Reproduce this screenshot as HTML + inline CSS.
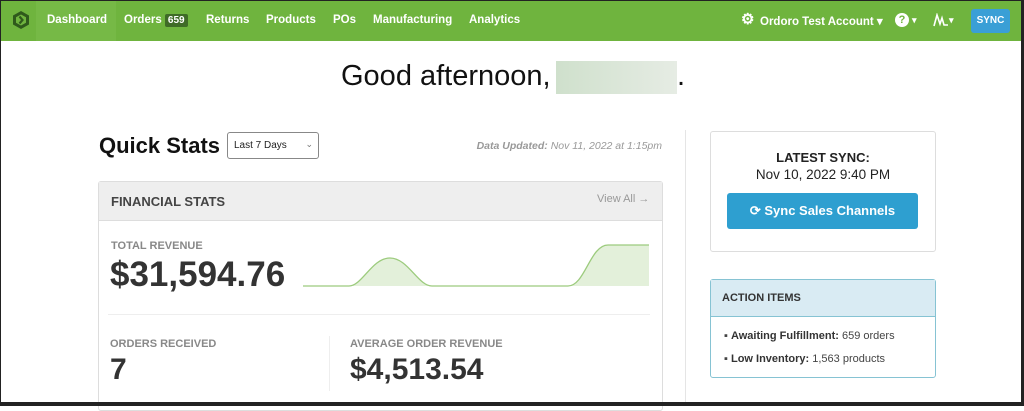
<!DOCTYPE html>
<html><head><meta charset="utf-8"><style>
*{box-sizing:border-box;margin:0;padding:0}
body{width:1024px;height:406px;overflow:hidden;background:#fff;font-family:"Liberation Sans",Arial,sans-serif;position:relative;color:#222}
.abs{position:absolute}
.nav{left:0;top:0;width:1024px;height:41px;background:#6fb43e;border-top:1px solid #222}
.nav .it{position:absolute;top:13px;color:#fff;font-weight:bold;font-size:11.5px}
.badge{background:#3f6b27;border-radius:2px;padding:1px 3px;font-size:10px}
.brd{border:1px solid #ddd}
.lbl{color:#888;font-size:11px;font-weight:bold}
.big{font-weight:bold;color:#333}
</style></head><body>
<div class="abs nav">
 <div class="abs" style="left:36px;top:0;width:80px;height:40px;background:#76b946"></div>
 <svg class="abs" style="left:11px;top:9px" width="20" height="20" viewBox="0 0 20 20"><polygon points="10,1 18,5.5 18,14.5 10,19 2,14.5 2,5.5" fill="#2f5a1c"/><polygon points="10,4.5 15,7.3 15,12.7 10,15.5 5,12.7 5,7.3" fill="#6fb43e"/><path d="M8.5,6.5 L11.5,10 L8.5,13.5" stroke="#2f5a1c" stroke-width="2.2" fill="none"/></svg>
 <span class="it" style="left:47px">Dashboard</span>
 <span class="it" style="left:124px">Orders <span class="badge">659</span></span>
 <span class="it" style="left:206px">Returns</span>
 <span class="it" style="left:266px">Products</span>
 <span class="it" style="left:333px">POs</span>
 <span class="it" style="left:373px">Manufacturing</span>
 <span class="it" style="left:469px">Analytics</span>
 <span class="it" style="left:741px;font-size:15px;top:9px">⚙</span>
 <span class="it" style="left:760px">Ordoro Test Account ▾</span>
 <span class="abs" style="left:895px;top:12px;width:14px;height:14px;border-radius:50%;background:#fff;color:#6fb43e;font-size:11px;font-weight:bold;text-align:center;line-height:14px">?</span>
 <span class="it" style="left:912px;font-size:9px;top:14px">▾</span>
 <svg class="abs" style="left:933px;top:12px" width="16" height="14" viewBox="0 0 16 14"><path d="M1,13 L4,2 L7,11 L9,5 L11,12 L15,12" stroke="#fff" stroke-width="1.6" fill="none"/></svg>
 <span class="it" style="left:949px;font-size:9px;top:14px">▾</span>
 <div class="abs" style="left:971px;top:8px;width:39px;height:24px;background:#3a9fd6;border-radius:3px;color:#fff;font-size:10px;font-weight:bold;text-align:center;line-height:24px">SYNC</div>
</div>
<div class="abs" style="left:341px;top:60px;font-size:29px;color:#111">Good afternoon,</div>
<div class="abs" style="left:556px;top:61px;width:121px;height:33px;background:linear-gradient(90deg,#cfe0cc,#e6ece4)"></div>
<div class="abs" style="left:677px;top:60px;font-size:29px;color:#111">.</div>

<div class="abs" style="left:99px;top:133px;font-size:22px;font-weight:bold;color:#111">Quick Stats</div>
<div class="abs" style="left:227px;top:132px;width:92px;height:27px;border:1px solid #888;border-radius:3px;font-size:10px;padding:7px 6px;color:#222">Last 7 Days<span style="position:absolute;right:5px;top:6px;font-size:9px;color:#777">⌄</span></div>
<div class="abs" style="left:420px;top:140px;width:242px;text-align:right;font-size:10.5px;font-style:italic;color:#999"><b>Data Updated:</b> Nov 11, 2022 at 1:15pm</div>

<div class="abs" style="left:685px;top:130px;width:1px;height:272px;background:#e5e5e5"></div>

<div class="abs brd" style="left:98px;top:181px;width:565px;height:230px;border-radius:3px"></div>
<div class="abs" style="left:99px;top:182px;width:563px;height:39px;background:#eee;border-bottom:1px solid #ddd"></div>
<div class="abs" style="left:111px;top:194px;font-size:13px;font-weight:bold;color:#444">FINANCIAL STATS</div>
<div class="abs" style="left:597px;top:193px;font-size:11px;color:#999">View All →</div>
<div class="abs lbl" style="left:111px;top:240px">TOTAL REVENUE</div>
<div class="abs big" style="left:110px;top:255px;font-size:35px">$31,594.76</div>
<svg class="abs" style="left:0;top:0" width="1024" height="406"><path d="M303,286 L349,286 C362,286 372,258 390,258 C408,258 418,286 432,286 L568,286 C585,286 590,245 608,245 L649,245 L649,286 Z" fill="#e3f0da" stroke="none"/><path d="M303,286 L349,286 C362,286 372,258 390,258 C408,258 418,286 432,286 L568,286 C585,286 590,245 608,245 L649,245" fill="none" stroke="#9ccb7d" stroke-width="1.3"/></svg>
<div class="abs" style="left:108px;top:314px;width:542px;height:1px;background:#eee"></div>
<div class="abs" style="left:329px;top:336px;width:1px;height:55px;background:#eee"></div>
<div class="abs lbl" style="left:110px;top:338px">ORDERS RECEIVED</div>
<div class="abs big" style="left:110px;top:353px;font-size:30px">7</div>
<div class="abs lbl" style="left:350px;top:338px">AVERAGE ORDER REVENUE</div>
<div class="abs big" style="left:350px;top:353px;font-size:30px">$4,513.54</div>

<div class="abs brd" style="left:710px;top:131px;width:226px;height:121px;border-radius:3px"></div>
<div class="abs" style="left:710px;top:150px;width:226px;text-align:center;font-size:13px;font-weight:bold;color:#222">LATEST SYNC:</div>
<div class="abs" style="left:710px;top:167px;width:226px;text-align:center;font-size:13.5px;color:#222">Nov 10, 2022 9:40 PM</div>
<div class="abs" style="left:727px;top:193px;width:191px;height:36px;background:#2e9fd0;border-radius:3px;color:#fff;font-size:13px;font-weight:bold;text-align:center;line-height:36px">⟳ Sync Sales Channels</div>

<div class="abs" style="left:710px;top:279px;width:226px;height:99px;border:1px solid #86c3d3;border-radius:3px"></div>
<div class="abs" style="left:711px;top:280px;width:224px;height:37px;background:#d9ebf3;border-bottom:1px solid #86c3d3"></div>
<div class="abs" style="left:722px;top:292px;font-size:11px;font-weight:bold;color:#333">ACTION ITEMS</div>
<div class="abs" style="left:724px;top:330px;font-size:11px;color:#444">▪ <b style="color:#333">Awaiting Fulfillment:</b> 659 orders</div>
<div class="abs" style="left:724px;top:353px;font-size:11px;color:#444">▪ <b style="color:#333">Low Inventory:</b> 1,563 products</div>

<div class="abs" style="left:0;top:402px;width:1024px;height:4px;background:#222"></div>
<div class="abs" style="left:1021px;top:0;width:3px;height:406px;background:#222"></div>
<div class="abs" style="left:0;top:0;width:1px;height:406px;background:#222"></div>
</body></html>
